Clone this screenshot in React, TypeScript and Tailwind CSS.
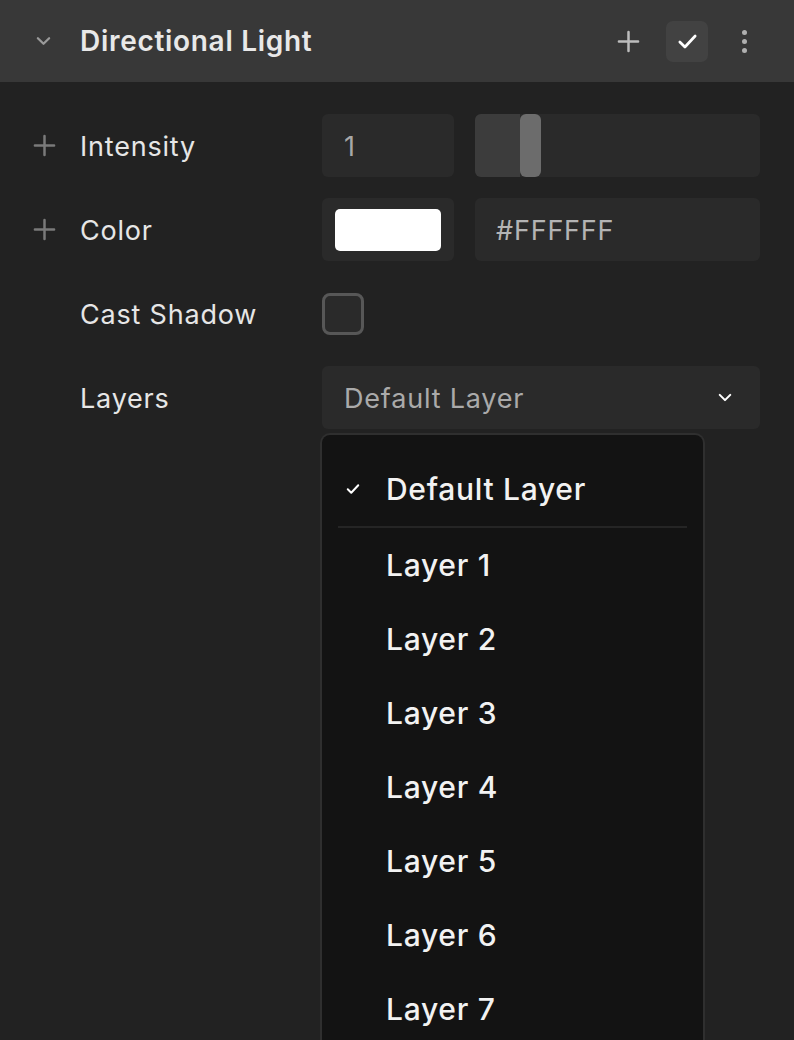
import React from 'react';

const layers = ['Layer 1', 'Layer 2', 'Layer 3', 'Layer 4', 'Layer 5', 'Layer 6', 'Layer 7'];

function PlusIcon({ className }: { className?: string }) {
  return (
    <svg viewBox="0 0 24 24" className={className} fill="none" stroke="currentColor" strokeWidth="2.6" strokeLinecap="round">
      <path d="M12 2v20M2 12h20" />
    </svg>
  );
}

function Chevron({ className }: { className?: string }) {
  return (
    <svg viewBox="0 0 16 10" className={className} fill="none" stroke="currentColor" strokeWidth="2.4" strokeLinecap="round" strokeLinejoin="round">
      <path d="M2 2l6 6 6-6" />
    </svg>
  );
}

function Check({ className, w = 3 }: { className?: string; w?: number }) {
  return (
    <svg viewBox="0 0 24 20" className={className} fill="none" stroke="currentColor" strokeWidth={w} strokeLinecap="round" strokeLinejoin="round">
      <path d="M3 10.5l6 6L21 3.5" />
    </svg>
  );
}

function Row({ label, plus, children }: { label: string; plus?: boolean; children: React.ReactNode }) {
  return (
    <div className="grid grid-cols-[322px_1fr] h-[63px] items-center">
      <div className="flex items-center">
        <div className="w-[80px] flex pl-[33px]">
          {plus && <PlusIcon className="w-[23px] h-[23px] text-[#7a7a7a]" />}
        </div>
        <span className="mt-[3px] text-[27px] text-[#e6e6e6] tracking-[0.8px]">{label}</span>
      </div>
      <div className="h-full flex items-center">{children}</div>
    </div>
  );
}

export default function App() {
  return (
    <div className="w-[794px] h-[1040px] bg-[#222222] overflow-hidden font-['Inter',sans-serif] relative">
      <div className="h-[82px] bg-[#383838] flex items-center pl-[36px] pr-[47px]">
        <Chevron className="w-[15px] h-[10px] text-[#9a9a9a]" />
        <span className="ml-[29px] text-[28px] font-semibold text-[#e8e8e8] tracking-[0.7px]">Directional Light</span>
        <div className="ml-auto flex items-center">
          <PlusIcon className="w-[23px] h-[23px] text-[#bdbdbd]" />
          <div className="ml-[26px] w-[42px] h-[41px] rounded-[7px] bg-[#424242] flex items-center justify-center">
            <Check className="w-[21px] h-[17px] text-white" w={3.2} />
          </div>
          <div className="ml-[34px] flex flex-col gap-[4px] items-center">
            <span className="w-[5px] h-[5px] rounded-full bg-[#b0b0b0]" />
            <span className="w-[5px] h-[5px] rounded-full bg-[#b0b0b0]" />
            <span className="w-[5px] h-[5px] rounded-full bg-[#b0b0b0]" />
          </div>
        </div>
      </div>

      <div className="pt-[32px] pr-[34px] flex flex-col gap-[21px]">
        <Row label="Intensity" plus>
          <div className="w-[132px] h-full rounded-[6px] bg-[#2a2a2a] flex items-center pl-[22px] pt-[3px] text-[27px] text-[#a8a8a8]">1</div>
          <div className="ml-[21px] flex-1 h-full rounded-[6px] bg-[#2a2a2a] overflow-hidden flex">
            <div className="w-[45px] h-full bg-[#3c3c3c]" />
            <div className="w-[21px] h-full rounded-[6px] bg-[#6c6c6c]" />
          </div>
        </Row>
        <Row label="Color" plus>
          <div className="w-[132px] h-full rounded-[6px] bg-[#2a2a2a] flex items-center justify-center">
            <div className="w-[106px] h-[42px] rounded-[5px] bg-white" />
          </div>
          <div className="ml-[21px] flex-1 h-full rounded-[6px] bg-[#2a2a2a] flex items-center pl-[21px] pt-[3px] text-[27px] text-[#b4b4b4] tracking-[0.8px]">
            #FFFFFF
          </div>
        </Row>
        <Row label="Cast Shadow">
          <div className="w-[42px] h-[42px] rounded-[8px] border-[3px] border-[#575757] bg-[#2a2a2a]" />
        </Row>
        <Row label="Layers">
          <div className="relative w-full h-full">
            <div className="w-full h-full rounded-[6px] bg-[#2a2a2a] flex items-center pl-[22px] pr-[28px] text-[27px] text-[#aaaaaa] tracking-[0.8px]">
              <span className="mt-[3px]">Default Layer</span>
              <Chevron className="ml-auto w-[14px] h-[9px] text-white" />
            </div>
            <div className="absolute left-[-2px] top-[67px] w-[385px] h-[640px] rounded-t-[10px] bg-[#131313] border-[2px] border-[#2f2f2f] border-b-0">
              <div className="pt-[17px]">
                <div className="h-[74px] flex items-center pl-[24px]">
                  <Check className="w-[14px] h-[12px] text-white" w={3.4} />
                  <span className="ml-[26px] text-[30px] font-medium text-[#f2f2f2] tracking-[0.7px]">Default Layer</span>
                </div>
                <div className="mx-[16px] h-[2px] bg-[#252525]" />
                {layers.map((l) => (
                  <div key={l} className="h-[74px] flex items-center pl-[64px]">
                    <span className="text-[30px] font-medium text-[#f2f2f2] tracking-[0.7px]">{l}</span>
                  </div>
                ))}
              </div>
            </div>
          </div>
        </Row>
      </div>
    </div>
  );
}
